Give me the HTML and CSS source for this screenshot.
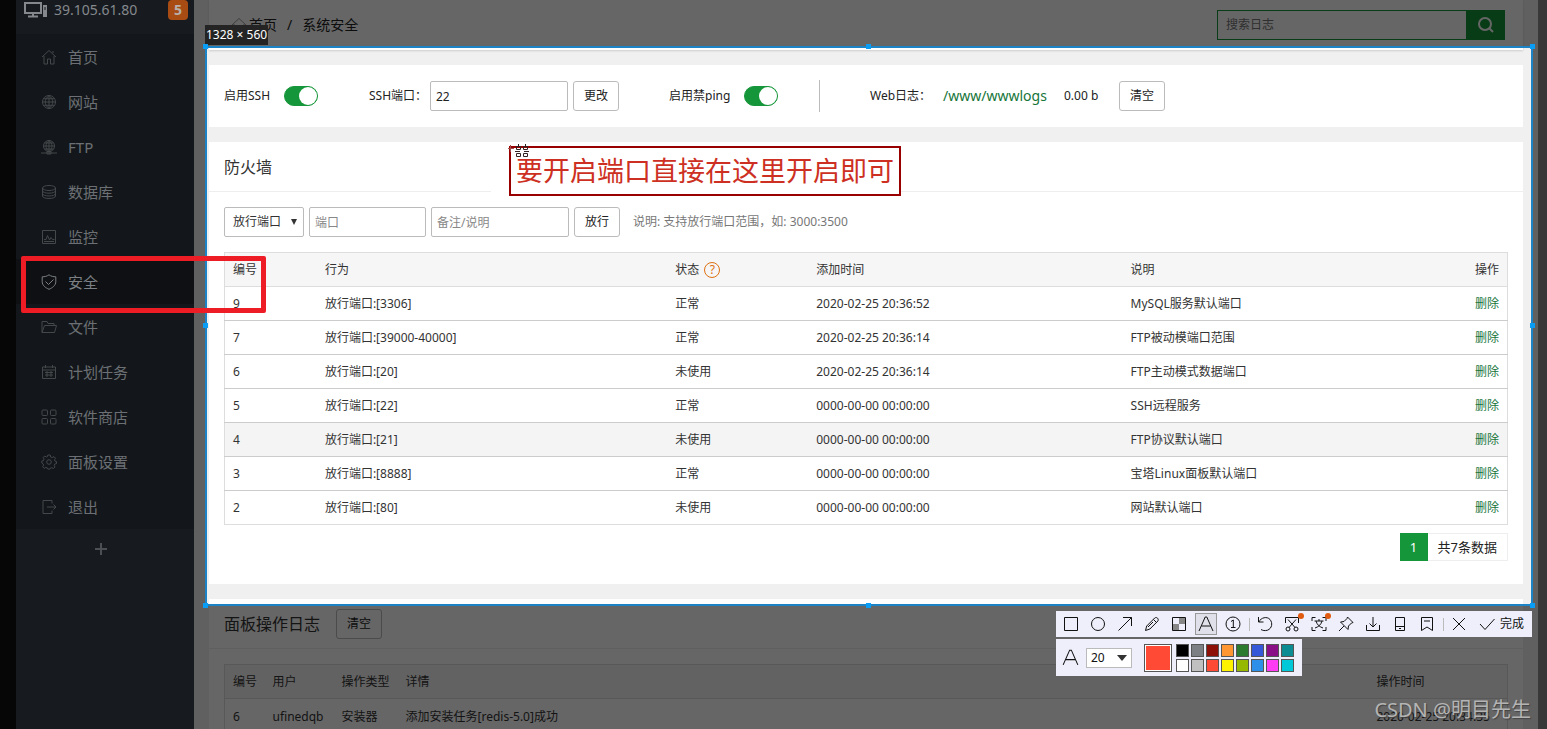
FILE: index.html
```html
<!DOCTYPE html>
<html lang="zh-CN">
<head>
    <meta charset="UTF-8">
    <meta name="viewport" content="width=device-width, initial-scale=1.0">
    <title>系统安全</title>
    <link rel="stylesheet" href="styles.css">
</head>
<body>

    <div class="app">
        <aside class="sidebar">
            <div class="server">
                <svg class="server-icon" viewBox="0 0 24 18"><path d="M1 2h16v10H1zM9 12v3M4 15.500h10" /><path class="solid" d="M19 4h4v12h-4z" /><path class="slot" d="M21 6v3" /></svg>
                <span class="server-ip">39.105.61.80</span>
                <span class="badge">5</span>
            </div>
            <nav class="menu">
                <a class="menu-item" href="#"><svg viewBox="0 0 16 16"><path d="M1 8l7-6.500L15 8M3 7v8h3.500v-5h3v5H13V7M12 4V2" /></svg>首页</a>
                <a class="menu-item" href="#"><svg viewBox="0 0 16 16"><circle cx="8" cy="8" r="6.500" /><path d="M1.500 8h13M8 1.500v13M2.500 4.700h11M2.500 11.300h11M8 1.500c-5 4-5 9 0 13M8 1.500c5 4 5 9 0 13" /></svg>网站</a>
                <a class="menu-item" href="#"><svg viewBox="0 0 16 16"><circle cx="8" cy="7" r="5.500" /><path d="M2.500 7h11M8 1.500v13M3.500 4h9M3.500 10h9M8 1.500c-4 3-4 8 0 11M8 1.500c4 3 4 8 0 11M0 14h16M6 12.500h4v2.500H6z" /></svg>FTP</a>
                <a class="menu-item" href="#"><svg viewBox="0 0 16 16"><ellipse cx="8" cy="4" rx="6.500" ry="2.500" /><path d="M1.500 4v8c0 3.300 13 3.300 13 0V4M1.500 6.700c0 3.300 13 3.300 13 0M1.500 9.500c0 3.300 13 3.300 13 0" /></svg>数据库</a>
                <a class="menu-item" href="#"><svg viewBox="0 0 16 16"><path d="M1.500 1.500h13v13h-13zM3 10.500h2l1.500-4 2 4.500 1.500-2.500 1.500 2h2M3 12.500h10" /></svg>监控</a>
                <a class="menu-item active" href="#"><svg viewBox="0 0 16 16"><path d="M8 .8c2 1.500 4.500 2 6.800 2v5c0 3.500-3.300 6-6.800 7.500C4.500 13.800 1.200 11.300 1.200 7.800v-5C3.500 2.800 6 2.300 8 .8zM4.500 7.500l3 3 5-5" /></svg>安全</a>
                <a class="menu-item" href="#"><svg viewBox="0 0 16 16"><path d="M1 13.500v-11h5l1 2h6v2M1 13.500l2.500-7h12l-2 7z" /></svg>文件</a>
                <a class="menu-item" href="#"><svg viewBox="0 0 16 16"><path d="M1.500 3h13v11.500h-13zM1.500 6h13M4.500 1v3M11.500 1v3M4 8.500h8M4 11h8M6 7v6M10 7v6" /></svg>计划任务</a>
                <a class="menu-item" href="#"><svg viewBox="0 0 16 16"><rect x="1" y="1" width="5.500" height="5.500" rx="1" /><rect x="9.500" y="1" width="5.500" height="5.500" rx="1" /><rect x="1" y="9.500" width="5.500" height="5.500" rx="1" /><rect x="9.500" y="9.500" width="5.500" height="5.500" rx="1" /></svg>软件商店</a>
                <a class="menu-item" href="#"><svg viewBox="0 0 16 16"><circle cx="8" cy="8" r="2.300" /><path d="M6.800 1h2.400l.5 2 1.500.6 1.800-1 1.500 1.700-1 1.600.5 1.300 1.500.4v2l-1.800.5-.5 1.200.8 1.700-1.600 1.500-1.600-.8-1.400.4-.5 1H6.800l-.5-1.200-1.500-.5-1.600 1-1.600-1.600 1-1.600L2 9.700.800 9V7l1.700-.5.5-1.400-.8-1.600 1.500-1.500 1.600 1 1.200-.5z" /></svg>面板设置</a>
                <a class="menu-item" href="#"><svg viewBox="0 0 16 16"><path d="M11 4.500v-3H2v13h9v-3M6 8h9M12.500 5.500L15 8l-2.500 2.500" /></svg>退出</a>
            </nav>
            <button class="menu-add" aria-label="添加"><svg viewBox="0 0 14 14"><path d="M7 1v12M1 7h12" /></svg></button>
        </aside>

        <main class="main">
            <header class="topbar">
                <div class="crumbs">
                    <svg viewBox="0 0 16 16"><path d="M1 8l7-6.500L15 8M3 7v8h3.500v-5h3v5H13V7" /></svg>
                    <a href="#">首页</a><span class="slash">/</span><span>系统安全</span>
                </div>
                <form class="search">
                    <input type="text" placeholder="搜索日志" aria-label="搜索日志">
                    <button type="button" aria-label="搜索"><svg viewBox="0 0 16 16"><circle cx="7" cy="7" r="6" /><path d="M11.500 11.500L15 15" /></svg></button>
                </form>
            </header>

            <section class="panel settings">
                <div class="setting">
                    <label class="ssh-label" for="ssh">启用SSH</label>
                    <input class="switch" type="checkbox" id="ssh" checked>
                </div>
                <div class="setting">
                    <label class="port-label" for="sshPort">SSH端口：</label>
                    <input class="field wide port" type="text" id="sshPort" value="22">
                    <button class="btn">更改</button>
                </div>
                <div class="setting">
                    <label class="ping-label" for="ping">启用禁ping</label>
                    <input class="switch" type="checkbox" id="ping" checked>
                </div>
                <div class="setting weblog">
                    <span class="weblog-label">Web日志：</span>
                    <a class="path" href="#">/www/wwwlogs</a>
                    <span class="size">0.00 b</span>
                    <button class="btn">清空</button>
                </div>
            </section>

            <section class="panel">
                <div class="panel-title"><h2>防火墙</h2></div>
                <div class="panel-body">
                    <div class="rule-form">
                        <div class="select-box">
                            <select class="field" aria-label="规则类型"><option>放行端口</option></select>
                        </div>
                        <input class="field short" type="text" placeholder="端口" aria-label="端口">
                        <input class="field wide" type="text" placeholder="备注/说明" aria-label="备注/说明">
                        <button class="btn">放行</button>
                        <span class="hint">说明: 支持放行端口范围，如: 3000:3500</span>
                    </div>
                    <table class="table rules">
                        <thead>
                            <tr>
                                <th class="c-id">编号</th>
                                <th class="c-action">行为</th>
                                <th class="c-state">状态 <a class="help" href="#">?</a></th>
                                <th class="c-time">添加时间</th>
                                <th>说明</th>
                                <th class="c-op">操作</th>
                            </tr>
                        </thead>
                        <tbody>
                            <tr><td>9</td><td>放行端口:[3306]</td><td>正常</td><td>2020-02-25 20:36:52</td><td>MySQL服务默认端口</td><td class="c-op"><a href="#">删除</a></td></tr>
                            <tr><td>7</td><td>放行端口:[39000-40000]</td><td>正常</td><td>2020-02-25 20:36:14</td><td>FTP被动模端口范围</td><td class="c-op"><a href="#">删除</a></td></tr>
                            <tr><td>6</td><td>放行端口:[20]</td><td>未使用</td><td>2020-02-25 20:36:14</td><td>FTP主动模式数据端口</td><td class="c-op"><a href="#">删除</a></td></tr>
                            <tr><td>5</td><td>放行端口:[22]</td><td>正常</td><td>0000-00-00 00:00:00</td><td>SSH远程服务</td><td class="c-op"><a href="#">删除</a></td></tr>
                            <tr class="hover"><td>4</td><td>放行端口:[21]</td><td>未使用</td><td>0000-00-00 00:00:00</td><td>FTP协议默认端口</td><td class="c-op"><a href="#">删除</a></td></tr>
                            <tr><td>3</td><td>放行端口:[8888]</td><td>正常</td><td>0000-00-00 00:00:00</td><td>宝塔Linux面板默认端口</td><td class="c-op"><a href="#">删除</a></td></tr>
                            <tr><td>2</td><td>放行端口:[80]</td><td>未使用</td><td>0000-00-00 00:00:00</td><td>网站默认端口</td><td class="c-op"><a href="#">删除</a></td></tr>
                        </tbody>
                    </table>
                    <div class="pager">
                        <span class="current">1</span>
                        <span class="total">共7条数据</span>
                    </div>
                </div>
            </section>

            <section class="panel">
                <div class="panel-title"><h2>面板操作日志</h2><button class="btn">清空</button></div>
                <div class="panel-body">
                    <table class="table logs">
                        <thead>
                            <tr><th class="l-id">编号</th><th class="l-user">用户</th><th class="l-type">操作类型</th><th>详情</th><th class="l-time">操作时间</th></tr>
                        </thead>
                        <tbody>
                            <tr><td>6</td><td>ufinedqb</td><td>安装器</td><td>添加安装任务[redis-5.0]成功</td><td>2020-02-25 20:34:35</td></tr>
                        </tbody>
                    </table>
                </div>
            </section>
        </main>
    </div>

    <!-- screen capture area and its tools -->
    <div class="capture">
        <span class="capture-size">1328 × 560</span>
        <i class="handle top left"></i><i class="handle top center"></i><i class="handle top right"></i>
        <i class="handle middle left"></i><i class="handle middle right"></i>
        <i class="handle bottom left"></i><i class="handle bottom center"></i><i class="handle bottom right"></i>
    </div>

    <div class="note">
        <svg class="note-cursor" viewBox="0 0 22 16"><path class="cross" d="M0 4.500h6M2.500 1v7" /><path d="M8.500 2.500h4v3h-4zM15.500 2.500h4v3h-4zM8.500 9.500h4v3h-4zM15.500 9.500h4v3h-4zM10.500 0v2M17.500 0v2M7 7.500h5M16 7.500h5" /></svg>
        要开启端口直接在这里开启即可
    </div>
    <div class="mark"></div>

    <div class="tools">
        <div class="toolbar">
            <button class="tool" aria-label="矩形"><svg viewBox="0 0 20 20"><path d="M3.500 3.500h13v13h-13z" /></svg></button>
            <button class="tool" aria-label="椭圆"><svg viewBox="0 0 20 20"><circle cx="10" cy="10" r="6.500" /></svg></button>
            <button class="tool" aria-label="箭头"><svg viewBox="0 0 20 20"><path d="M3.500 16.500l13-13M8 3.500h8.500V12" /></svg></button>
            <button class="tool" aria-label="画笔"><svg viewBox="0 0 20 20"><path d="M3.500 16.500l1.200-4.500 8-8c2-1.500 4.500 1 3.200 3l-8 8zM11.500 5.500l3 3M6 13l5-5" /></svg></button>
            <button class="tool" aria-label="马赛克"><svg viewBox="0 0 20 20"><path class="shade" d="M10 4h6v6h-6zM4 10h6v6H4z" /><path d="M3.500 3.500h13v13h-13z" /></svg></button>
            <button class="tool selected" aria-label="文字"><svg viewBox="0 0 20 20"><path d="M3 17L9.200 3h1.600L17 17M5.500 12h9" /></svg></button>
            <button class="tool" aria-label="序号"><svg viewBox="0 0 20 20"><circle cx="10" cy="10" r="7" /><path d="M8 7.500L10.300 6v7.500M8 13.500h4.500" /></svg></button>
            <i class="split"></i>
            <button class="tool" aria-label="撤销"><svg viewBox="0 0 20 20"><path d="M3.500 3v5h5M3.800 8C6 3.500 12 2 15 5.500s2 9-2.500 10.700c-2.500.8-5 .3-6.500-.7" /></svg></button>
            <button class="tool dot" aria-label="长截图"><svg viewBox="0 0 20 20"><path d="M3.500 9V3.500h13V9M6 5.500l7 8M14 5.500l-7 8" /><circle cx="6" cy="15" r="2" /><circle cx="14" cy="15" r="2" /></svg></button>
            <button class="tool dot" aria-label="翻译"><svg viewBox="0 0 20 20"><path d="M3 7V3.500h3.500M13.500 3.500H17V7M3 13v3.500h3.500M13.500 16.500H17V13M5.500 7h9M10 5v2M7 7c1 4 4 6 7 7M13 7c-1 4-4 6-7 7" /></svg></button>
            <button class="tool" aria-label="钉在屏幕"><svg viewBox="0 0 20 20"><path d="M11.500 3l5.500 5.500-1.500.5-3 3-.5 3.500L4.500 8 8 7.500l3-3zM8 12l-5 5" /></svg></button>
            <button class="tool" aria-label="下载"><svg viewBox="0 0 20 20"><path d="M10 3v10M6.500 9.500L10 13l3.500-3.500M3.500 11v5.500h13V11" /></svg></button>
            <button class="tool" aria-label="发送到手机"><svg viewBox="0 0 20 20"><path d="M5.500 3.500h9v13h-9zM5.500 12.500h9M9 14.500h2" /></svg></button>
            <button class="tool" aria-label="收藏"><svg viewBox="0 0 20 20"><path d="M4.500 3.500h11v13L10 13l-5.500 3.500zM7 7h6" /></svg></button>
            <i class="split"></i>
            <button class="tool" aria-label="退出"><svg viewBox="0 0 20 20"><path d="M4 4l12 12M16 4L4 16" /></svg></button>
            <button class="tool done"><svg viewBox="0 0 20 20"><path d="M3 10l5 5.500L17.500 5" /></svg>完成</button>
        </div>
        <div class="options">
            <svg class="letter" viewBox="0 0 20 20"><path d="M3 17L9.200 3h1.600L17 17M5.500 12h9" /></svg>
            <div class="font-size">
                <select aria-label="字号"><option>20</option></select>
            </div>
            <span class="picked"></span>
            <div class="swatches">
                <i class="black"></i><i class="gray"></i><i class="maroon"></i><i class="orange"></i><i class="green"></i><i class="blue"></i><i class="purple"></i><i class="teal"></i>
                <i class="white"></i><i class="silver"></i><i class="red"></i><i class="yellow"></i><i class="lime"></i><i class="sky"></i><i class="pink"></i><i class="cyan"></i>
            </div>
        </div>
    </div>

    <div class="watermark">CSDN @明目先生</div>

</body>
</html>
```
FILE: styles.css
```css
* {
    margin: 0;
    padding: 0;
    box-sizing: border-box;
}

body {
    position: relative;
    height: 100vh;
    overflow: hidden;
    background: #8c8c8c;
    color: #333;
    font-family: "Noto Sans", "Noto Sans CJK SC", sans-serif;
    font-size: 12px;
    line-height: 18px;
}

button,
input,
select {
    font: inherit;
    color: inherit;
}

button {
    cursor: pointer;
}

a {
    color: #16753a;
    text-decoration: none;
}

svg {
    flex: none;
    fill: none;
    stroke: currentColor;
}

.app {
    display: flex;
    height: 100%;
    padding-right: 9px;
    border-left: 16px solid #0f0f0f;
}

/* sidebar */

.sidebar {
    position: relative;
    z-index: 2;
    flex: none;
    width: 178px;
    background: #171b20;
    color: #6c7074;
    font-size: 15px;
}

.server {
    display: flex;
    align-items: flex-start;
    height: 34px;
    padding: 0 6px 0 8px;
    color: #85898d;
}

.server-icon {
    width: 24px;
    height: 20px;
    stroke-width: 2;
}

.server-icon .solid {
    fill: currentColor;
    stroke: none;
}

.server-icon .slot {
    stroke: #171b20;
    stroke-width: 1;
}

.server-ip {
    flex: 1;
    padding-left: 6px;
    font-size: 14px;
    line-height: 20px;
}

.badge {
    width: 20px;
    height: 20px;
    border-radius: 4px;
    background: #a94c14;
    color: #b8b0aa;
    font-weight: bold;
    font-size: 14px;
    line-height: 20px;
    text-align: center;
}

.menu {
    background: #13171b;
}

.menu-item {
    display: flex;
    align-items: center;
    gap: 11px;
    height: 45px;
    padding-left: 25px;
    color: #6c7074;
}

.menu-item svg {
    width: 16px;
    height: 16px;
    color: #44484b;
}

.menu-item.active {
    background: #0e1013;
    color: #7c8084;
}

.menu-item.active svg {
    color: #7c8084;
}

.menu-add {
    display: block;
    width: 100%;
    height: 42px;
    padding-right: 8px;
    border: none;
    background: none;
    color: #4c5054;
}

.menu-add svg {
    width: 14px;
    height: 14px;
    stroke-width: 2;
}

/* main column */

.main {
    flex: 1;
    min-width: 0;
    padding: 0 15px;
    background: #f0f0f0;
}

.topbar {
    display: flex;
    justify-content: space-between;
    align-items: center;
    height: 50px;
    margin-bottom: 15px;
    padding: 0 18px 0 22px;
    background: #fff;
    box-shadow: 0 1px 2px #ccc;
}

.crumbs {
    display: flex;
    align-items: center;
    color: #222;
    font-size: 14px;
}

.crumbs a {
    color: #222;
}

.crumbs svg {
    width: 16px;
    height: 16px;
    margin-right: 2px;
    color: #999;
}

.crumbs .slash {
    margin: 0 10px;
}

.search {
    display: flex;
    width: 288px;
    height: 30px;
}

.search input {
    flex: 1;
    min-width: 0;
    padding: 0 8px;
    border: 1px solid #16963a;
    background: #fff;
}

.search input::placeholder {
    color: #777;
}

.search button {
    width: 38px;
    border: none;
    background: #16963a;
    color: #fff;
}

.search svg {
    display: block;
    width: 16px;
    height: 16px;
    margin: 0 auto;
    stroke-width: 2;
}

.panel {
    margin-bottom: 15px;
    background: #fff;
}

.panel-title {
    display: flex;
    align-items: center;
    gap: 16px;
    height: 50px;
    padding: 0 15px;
    border-bottom: 1px solid #eee;
}

.panel-title h2 {
    font-weight: normal;
    font-size: 16px;
}

.panel-body {
    padding: 15px 15px 23px;
}

.settings {
    display: grid;
    grid-template-columns: 145px 300px 150px 1fr;
    height: 62px;
    padding: 15px;
    color: #222;
}

.setting {
    display: flex;
    align-items: center;
}

.ssh-label {
    width: 60px;
}

.port-label {
    width: 61px;
}

.ping-label {
    width: 75px;
}

.weblog {
    padding-left: 50px;
    border-left: 1px solid #bbb;
}

.weblog-label {
    width: 73px;
}

.path {
    width: 121px;
    font-size: 14px;
}

.size {
    width: 55px;
}

.port {
    margin-right: 5px;
}

.switch {
    appearance: none;
    width: 34px;
    height: 20px;
    border: 1px solid #16963a;
    border-radius: 10px;
    background: #16963a;
    cursor: pointer;
}

.switch::before {
    content: '';
    display: block;
    width: 18px;
    height: 18px;
    border-radius: 50%;
    background: #fff;
}

.switch:checked::before {
    margin-left: auto;
}

.field {
    height: 30px;
    padding: 0 5px;
    border: 1px solid #bbb;
    border-radius: 2px;
    background: #fff;
}

.field::placeholder {
    color: #888;
}

.field.wide {
    width: 138px;
}

.field.short {
    width: 117px;
}

.btn {
    width: 46px;
    height: 30px;
    border: 1px solid #bbb;
    border-radius: 3px;
    background: #fff;
    color: #222;
}

.rule-form {
    display: flex;
    align-items: center;
    gap: 5px;
    margin-bottom: 15px;
}

.select-box {
    position: relative;
    width: 80px;
}

.select-box select {
    appearance: none;
    width: 100%;
    padding: 0 8px;
}

.select-box::after {
    content: '';
    position: absolute;
    top: 12px;
    right: 7px;
    border: 3px solid transparent;
    border-top: 6px solid #333;
    border-bottom: none;
    pointer-events: none;
}

.hint {
    padding-left: 8px;
    color: #777;
}

.table {
    width: 100%;
    border: 1px solid #ddd;
    border-collapse: collapse;
    table-layout: fixed;
}

.table th,
.table td {
    height: 34px;
    padding: 0 8px;
    border-bottom: 1px solid #ccc;
    font-weight: normal;
    text-align: left;
    white-space: nowrap;
}

.table th {
    border-color: #ddd;
    background: #f6f6f6;
}

.table tbody tr:last-child td {
    border-color: #ddd;
}

.table .hover td {
    background: #f4f4f4;
}

.c-id {
    width: 7.2%;
}

.c-action {
    width: 27.3%;
}

.c-state {
    width: 11%;
}

.c-time {
    width: 24.5%;
}

.table .c-op {
    text-align: right;
}

.help {
    display: inline-block;
    width: 16px;
    height: 16px;
    margin-left: 2px;
    border: 1px solid #dd7010;
    border-radius: 50%;
    color: #dd7010;
    line-height: 14px;
    text-align: center;
}

.pager {
    display: flex;
    justify-content: flex-end;
    margin-top: 8px;
    font-size: 13px;
    line-height: 28px;
}

.pager .current {
    width: 28px;
    background: #16963a;
    color: #fff;
    text-align: center;
}

.pager .total {
    padding: 0 10px;
    border: 1px solid #eee;
    border-left: none;
    line-height: 26px;
    color: #222;
}

.l-id {
    width: 40px;
}

.l-user {
    width: 69px;
}

.l-type {
    width: 64px;
}

.l-time {
    width: 139px;
}

.logs tbody td {
    height: 36px;
}

/* capture area */

.capture {
    position: absolute;
    z-index: 1;
    top: 46px;
    left: 205px;
    right: 14px;
    height: 560px;
    border: 2px solid #1c84c6;
    box-shadow: 0 0 0 2000px rgba(0, 0, 0, 0.6);
}

.capture-size {
    position: absolute;
    left: -2px;
    bottom: 100%;
    margin-bottom: 3px;
    padding: 0 1px;
    background: #242424;
    color: #fff;
    line-height: 20px;
    white-space: nowrap;
}

.handle {
    position: absolute;
    width: 5px;
    height: 5px;
    background: #0a9df5;
}

.handle.top {
    top: -4px;
}

.handle.middle {
    top: calc(50% - 3px);
}

.handle.bottom {
    bottom: -4px;
}

.handle.left {
    left: -4px;
}

.handle.center {
    left: calc(50% - 3px);
}

.handle.right {
    right: -4px;
}

.note {
    position: absolute;
    z-index: 3;
    top: 146px;
    left: 509px;
    padding: 0 5px;
    border: 2px solid #900;
    background: #fff;
    box-shadow: -18px 0 #fff;
    color: #cd3022;
    font-size: 27px;
    line-height: 46px;
    white-space: nowrap;
}

.note-cursor {
    position: absolute;
    top: -4px;
    left: -3px;
    width: 22px;
    height: 16px;
    color: #332222;
}

.note-cursor .cross {
    stroke: #a05050;
}

.mark {
    position: absolute;
    z-index: 3;
    top: 256px;
    left: 21px;
    width: 245px;
    height: 57px;
    border: 5px solid #ee1c25;
    border-radius: 2px;
}

.tools {
    position: absolute;
    z-index: 3;
    top: 611px;
    right: 15px;
    color: #111;
}

.toolbar {
    display: flex;
    align-items: center;
    height: 26px;
    margin-bottom: 2px;
    padding: 0 8px 0 2px;
    background: #eeeffa;
}

.tool {
    position: relative;
    display: flex;
    justify-content: center;
    align-items: center;
    width: 27px;
    height: 22px;
    border: none;
    background: none;
}

.tool svg {
    width: 20px;
    height: 20px;
}

.tool .shade {
    fill: #888;
    stroke: none;
}

.tool.selected svg {
    background: #dfe0ea;
    outline: 1px solid #999;
}

.tool.dot::after {
    content: '';
    position: absolute;
    top: 0;
    right: 2px;
    width: 6px;
    height: 6px;
    border-radius: 50%;
    background: #e05a10;
}

.tool.done {
    gap: 3px;
    width: auto;
    padding-left: 4px;
}

.split {
    width: 1px;
    height: 13px;
    margin: 0 2px;
    background: #bbb;
}

.options {
    display: flex;
    align-items: center;
    width: 246px;
    height: 37px;
    padding-left: 4px;
    background: #eeeffa;
}

.letter {
    width: 21px;
    height: 21px;
}

.font-size {
    position: relative;
    width: 46px;
    margin: 0 12px 0 5px;
}

.font-size select {
    appearance: none;
    display: block;
    width: 100%;
    height: 20px;
    padding: 0 4px;
    border: 1px solid #bbb;
    background: #fff;
    color: #111;
}

.font-size::after {
    content: '';
    position: absolute;
    top: 7px;
    right: 5px;
    border: 5px solid transparent;
    border-top: 6px solid #333;
    border-bottom: none;
    pointer-events: none;
}

.picked {
    width: 28px;
    height: 28px;
    margin-right: 4px;
    border: 1px solid #555;
    background: #ff4a36;
    box-shadow: inset 0 0 0 1px #fff;
}

.swatches {
    display: grid;
    grid-template-columns: repeat(8, 13px);
    gap: 2px;
}

.swatches i {
    height: 13px;
    border: 1px solid #555;
}

.black { background: #000; }
.gray { background: #7c8084; }
.maroon { background: #8c1007; }
.orange { background: #ff9632; }
.green { background: #2b7a2f; }
.blue { background: #3558d8; }
.purple { background: #8a1088; }
.teal { background: #0b8c92; }
.white { background: #fff; }
.silver { background: #c0c0c0; }
.red { background: #ff4a36; }
.yellow { background: #fff200; }
.lime { background: #96b800; }
.sky { background: #2d8fe8; }
.pink { background: #ff3cf4; }
.cyan { background: #00c8d8; }

.watermark {
    position: absolute;
    z-index: 3;
    right: 16px;
    bottom: 4px;
    color: #b4b4b4;
    font-size: 20px;
    line-height: 30px;
    text-shadow: 1px 1px 1px #444;
}
```
